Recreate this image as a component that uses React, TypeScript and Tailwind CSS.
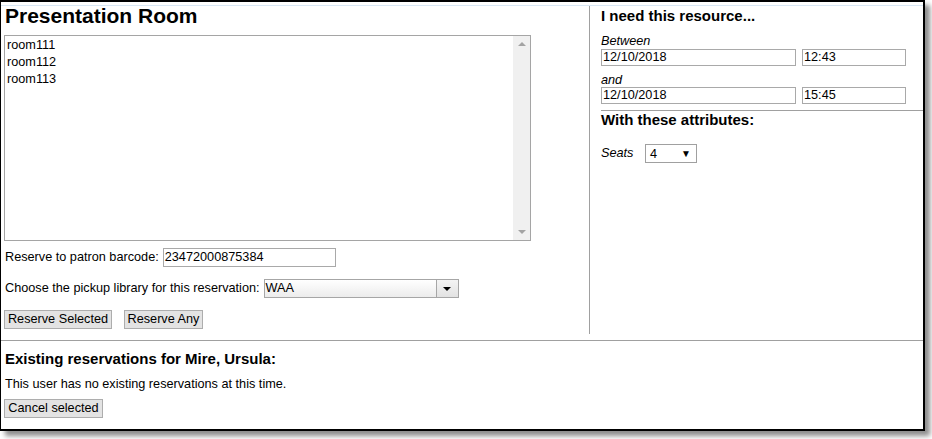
import React from "react";

const rooms = ["room111", "room112", "room113"];

function Button({ label, width }: { label: string; width: string }) {
  return (
    <button
      type="button"
      className={`${width} h-[19px] border border-[#adadad] bg-[#e3e3e3] text-[12.7px] leading-[17px] text-black text-center`}
    >
      {label}
    </button>
  );
}

function TextInput({ value, width }: { value: string; width: string }) {
  return (
    <div
      className={`${width} h-[17px] border border-[#a9a9a9] bg-white pl-[1px] text-[12.7px] leading-[15px] text-black`}
    >
      {value}
    </div>
  );
}

export default function App() {
  return (
    <div className="w-[932px] h-[439px] bg-white font-['Liberation_Sans',Arial,sans-serif] text-black">
      <div className="w-[925px] h-[431px] border-l border-t-2 border-r-2 border-b-2 border-black bg-white shadow-[5px_5px_5px_rgba(0,0,0,0.45)] flex flex-col">
        <div className="mt-[3px] h-px bg-[#d8e7f5]" />

        {/* top area: room chooser and resource attributes */}
        <div className="flex items-start h-[334px]">
          <div className="w-[589px] h-[328px] border-r border-[#a0a0a0] pl-[3px]">
            <h2 className="pl-[1px] text-[21px] leading-[20px] font-bold">
              Presentation Room
            </h2>

            <div className="mt-[9px] w-[527px] h-[206px] border border-[#a5a5a5] flex">
              <div className="flex-1 pl-[2px] pt-[1px] text-[12.7px] leading-[17px]">
                {rooms.map((room) => (
                  <div key={room}>{room}</div>
                ))}
              </div>
              <div className="w-[17px] bg-[#f0f0f0] flex flex-col items-center justify-between py-[6px]">
                <div className="w-0 h-0 border-l-[4px] border-r-[4px] border-b-[4px] border-l-transparent border-r-transparent border-b-[#a3a3a3]" />
                <div className="w-0 h-0 border-l-[4px] border-r-[4px] border-t-[4px] border-l-transparent border-r-transparent border-t-[#a3a3a3]" />
              </div>
            </div>

            <div className="mt-[7px] flex items-center text-[12.7px] leading-[15px]">
              <span className="pl-[1px]">Reserve to patron barcode:</span>
              <div className="ml-[4px] w-[173px] h-[19px] border border-[#a9a9a9] pl-[1px] leading-[17px]">
                23472000875384
              </div>
            </div>

            <div className="mt-[12px] flex items-center text-[12.7px] leading-[15px]">
              <span className="pl-[1px]">
                Choose the pickup library for this reservation:
              </span>
              <div className="ml-[4px] w-[195px] h-[19px] border border-[#a6a6a6] bg-gradient-to-b from-white to-[#ececec] flex">
                <span className="flex-1 pl-[1px] leading-[17px]">WAA</span>
                <div className="w-[22px] border-l border-[#a6a6a6] bg-gradient-to-b from-[#f4f4f4] to-[#e2e2e2] flex items-center justify-center">
                  <div className="w-0 h-0 border-l-[4px] border-r-[4px] border-t-[4px] border-l-transparent border-r-transparent border-t-black" />
                </div>
              </div>
            </div>

            <div className="mt-[12px] flex gap-[12px]">
              <Button label="Reserve Selected" width="w-[108px]" />
              <Button label="Reserve Any" width="w-[79px]" />
            </div>
          </div>

          <div className="flex-1 pl-[11px]">
            <h3 className="mt-[1px] text-[15px] leading-[18px] font-bold">
              I need this resource...
            </h3>
            <div className="mt-[9px] text-[12.7px] leading-[15px] italic">Between</div>
            <div className="flex gap-[6px]">
              <TextInput value="12/10/2018" width="w-[195px]" />
              <TextInput value="12:43" width="w-[104px]" />
            </div>
            <div className="mt-[7px] text-[12.7px] leading-[14px] italic">and</div>
            <div className="flex gap-[6px]">
              <TextInput value="12/10/2018" width="w-[195px]" />
              <TextInput value="15:45" width="w-[104px]" />
            </div>
            <div className="mt-[6px] h-px bg-[#a0a0a0]" />
            <h3 className="text-[15px] leading-[18px] font-bold">
              With these attributes:
            </h3>
            <div className="mt-[15px] flex items-center text-[12.7px]">
              <span className="italic w-[44px]">Seats</span>
              <div className="w-[52px] h-[19px] border border-[#a0a0a0] flex items-center pl-[4px] pr-[5px] justify-between">
                <span className="leading-[16px]">4</span>
                <span className="text-[10px] leading-[16px]">▼</span>
              </div>
            </div>
          </div>
        </div>

        {/* existing reservations */}
        <div className="border-t border-[#a0a0a0] pl-[3px]">
          <h3 className="mt-[9px] pl-[1px] text-[15px] leading-[18px] font-bold">
            Existing reservations for Mire, Ursula:
          </h3>
          <p className="mt-[9px] pl-[1px] text-[12.7px] leading-[15px]">
            This user has no existing reservations at this time.
          </p>
          <div className="mt-[7px] flex">
            <Button label="Cancel selected" width="w-[99px]" />
          </div>
        </div>
      </div>
    </div>
  );
}
